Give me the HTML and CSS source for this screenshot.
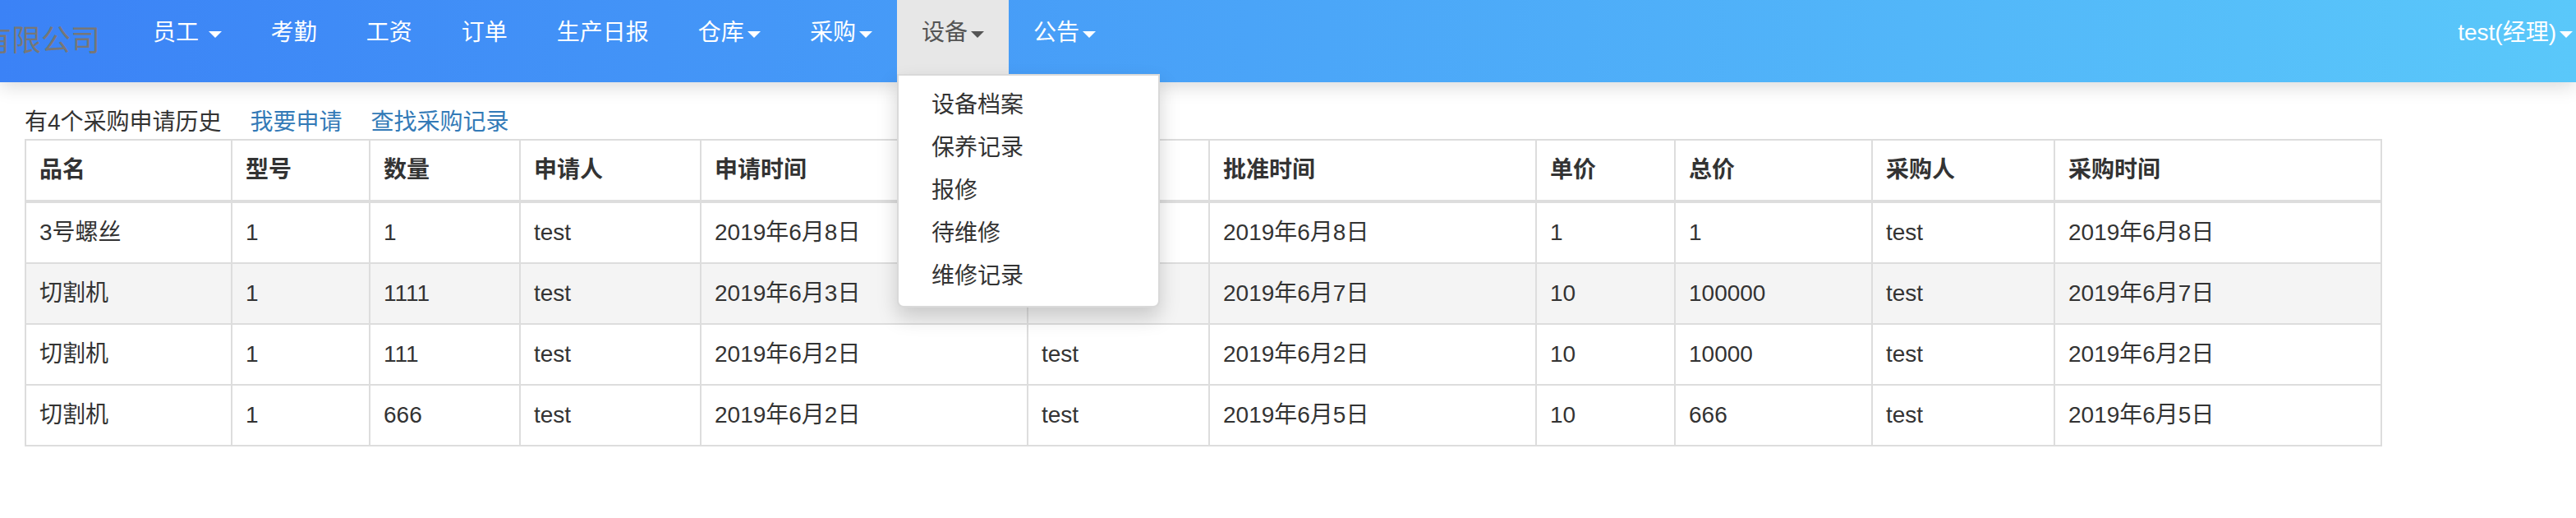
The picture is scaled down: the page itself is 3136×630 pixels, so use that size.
FILE: index.html
```html
<!DOCTYPE html>
<html lang="zh-CN">
<head>
<meta charset="utf-8">
<title>采购申请历史</title>
<link rel="stylesheet" href="styles.css">
</head>
<body>
<header class="navbar">
  <a class="brand">有限公司</a>
  <ul class="nav">
    <li class="nav-item"><a class="nav-link">员工 <span class="caret"></span></a></li>
    <li class="nav-item"><a class="nav-link">考勤</a></li>
    <li class="nav-item"><a class="nav-link">工资</a></li>
    <li class="nav-item"><a class="nav-link">订单</a></li>
    <li class="nav-item"><a class="nav-link">生产日报</a></li>
    <li class="nav-item"><a class="nav-link">仓库<span class="caret"></span></a></li>
    <li class="nav-item"><a class="nav-link">采购<span class="caret"></span></a></li>
    <li class="nav-item dropdown">
      <a class="nav-link active">设备<span class="caret"></span></a>
      <ul class="dropdown-menu">
        <li><a class="dropdown-link">设备档案</a></li>
        <li><a class="dropdown-link">保养记录</a></li>
        <li><a class="dropdown-link">报修</a></li>
        <li><a class="dropdown-link">待维修</a></li>
        <li><a class="dropdown-link">维修记录</a></li>
      </ul>
    </li>
    <li class="nav-item"><a class="nav-link">公告<span class="caret"></span></a></li>
  </ul>
  <div class="nav-right">
    <a class="nav-link user-link">test(经理)<span class="caret"></span></a>
  </div>
</header>

<main class="content">
  <div class="toolbar">
    <span class="summary">有4个采购申请历史</span>
    <a class="link">我要申请</a>
    <a class="link">查找采购记录</a>
  </div>
  <table class="data-table">
    <thead>
      <tr>
        <th class="c1">品名</th>
        <th class="c2">型号</th>
        <th class="c3">数量</th>
        <th class="c4">申请人</th>
        <th class="c5">申请时间</th>
        <th class="c6">批准人</th>
        <th class="c7">批准时间</th>
        <th class="c8">单价</th>
        <th class="c9">总价</th>
        <th class="c10">采购人</th>
        <th class="c11">采购时间</th>
      </tr>
    </thead>
    <tbody>
      <tr>
        <td>3号螺丝</td><td>1</td><td>1</td><td>test</td><td>2019年6月8日</td><td>test</td><td>2019年6月8日</td><td>1</td><td>1</td><td>test</td><td>2019年6月8日</td>
      </tr>
      <tr class="striped">
        <td>切割机</td><td>1</td><td>1111</td><td>test</td><td>2019年6月3日</td><td>test</td><td>2019年6月7日</td><td>10</td><td>100000</td><td>test</td><td>2019年6月7日</td>
      </tr>
      <tr>
        <td>切割机</td><td>1</td><td>111</td><td>test</td><td>2019年6月2日</td><td>test</td><td>2019年6月2日</td><td>10</td><td>10000</td><td>test</td><td>2019年6月2日</td>
      </tr>
      <tr>
        <td>切割机</td><td>1</td><td>666</td><td>test</td><td>2019年6月2日</td><td>test</td><td>2019年6月5日</td><td>10</td><td>666</td><td>test</td><td>2019年6月5日</td>
      </tr>
    </tbody>
  </table>
</main>
</body>
</html>
```

FILE: styles.css
```css
* {
  box-sizing: border-box;
}

html, body {
  margin: 0;
  padding: 0;
}

body {
  font-family: "Liberation Sans", "Noto Sans CJK SC", sans-serif;
  font-size: 28px;
  line-height: 40px;
  color: #333;
  background: #fff;
  overflow-x: hidden;
}

a {
  text-decoration: none;
  cursor: pointer;
}

/* ---------- navbar ---------- */
.navbar {
  position: relative;
  z-index: 10;
  display: flex;
  align-items: flex-start;
  height: 100px;
  background: linear-gradient(to right, #3b82f6, #5ac8fa);
  box-shadow: 0 4px 22px rgba(0, 0, 0, 0.16);
}

.brand {
  display: block;
  flex: none;
  margin-left: -52px;
  padding: 0 30px;
  font-size: 36px;
  line-height: 100px;
  height: 100px;
  color: #777;
  white-space: nowrap;
}

.nav {
  display: flex;
  list-style: none;
  margin: 0 0 0 4px;
  padding: 0;
}

.nav-item {
  position: relative;
}

.nav-link {
  display: block;
  height: 90px;
  padding: 20px 30px 30px;
  line-height: 40px;
  color: #fff;
  white-space: nowrap;
}

.nav-link.active {
  background: #e7e7e7;
  color: #555;
}

.caret {
  display: inline-block;
  width: 0;
  height: 0;
  margin-left: 4px;
  vertical-align: middle;
  border-top: 8px solid;
  border-right: 8px solid transparent;
  border-left: 8px solid transparent;
}

.nav-right {
  margin-left: auto;
}

.user-link {
  padding-right: 4px;
}

/* ---------- dropdown ---------- */
.dropdown-menu {
  position: absolute;
  top: 100%;
  left: 0;
  z-index: 20;
  width: 320px;
  margin: 0;
  padding: 10px 0;
  list-style: none;
  background: #fff;
  border: 2px solid rgba(0, 0, 0, 0.15);
  border-radius: 0 0 8px 8px;
  box-shadow: 0 12px 24px rgba(0, 0, 0, 0.175);
}

.dropdown-link {
  display: block;
  padding: 6px 40px;
  line-height: 40px;
  color: #333;
  white-space: nowrap;
}

/* ---------- content ---------- */
.content {
  padding: 29px 30px 0;
}

.toolbar {
  display: flex;
  gap: 35px;
  height: 40px;
  line-height: 40px;
}

.summary {
  color: #333;
}

.link {
  color: #337ab7;
}

.data-table {
  table-layout: fixed;
  width: 2870px;
  border-collapse: separate;
  border-spacing: 0;
  border-top: 2px solid #ddd;
  border-left: 2px solid #ddd;
}

.data-table th,
.data-table td {
  padding: 16px;
  line-height: 40px;
  text-align: left;
  vertical-align: top;
  border-right: 2px solid #ddd;
  border-bottom: 2px solid #ddd;
  white-space: nowrap;
}

.data-table th {
  font-weight: bold;
  border-bottom-width: 4px;
}

.striped td {
  background: #f4f4f4;
}

.c1 { width: 251px; }
.c2 { width: 168px; }
.c3 { width: 183px; }
.c4 { width: 220px; }
.c5 { width: 398px; }
.c6 { width: 221px; }
.c7 { width: 398px; }
.c8 { width: 169px; }
.c9 { width: 240px; }
.c10 { width: 222px; }
.c11 { width: 398px; }
```
